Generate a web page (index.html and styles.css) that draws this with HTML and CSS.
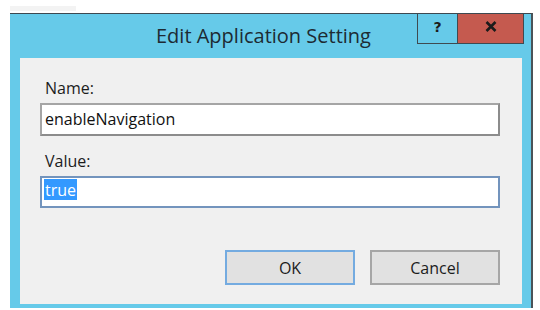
FILE: index.html
```html
<!DOCTYPE html>
<html lang="en">
<head>
    <meta charset="UTF-8">
    <title>Edit Application Setting</title>
    <link rel="stylesheet" href="styles.css">
</head>
<body>
    <div class="scrap"></div>
    <div class="window">
        <div class="titlebar">
            <div class="title">Edit Application Setting</div>
            <div class="caption-buttons">
                <div class="cap-btn help">?</div>
                <div class="cap-btn close">
                    <svg width="12" height="11" viewBox="0 0 12 11">
                        <path d="M1.5 1 L10.5 10 M10.5 1 L1.5 10" stroke="#1b1b1b" stroke-width="2.6" fill="none"/>
                    </svg>
                </div>
            </div>
        </div>
        <div class="panel">
            <label class="field-label">Name:</label>
            <div class="input">enableNavigation</div>
            <label class="field-label">Value:</label>
            <div class="input focused"><span class="selected">true</span></div>
            <div class="actions">
                <div class="btn default">OK</div>
                <div class="btn">Cancel</div>
            </div>
        </div>
    </div>
</body>
</html>
```

FILE: styles.css
```css
body {
    margin: 0;
    background: #fff;
    font-family: "Open Sans", "Noto Sans", sans-serif;
    color: #1c1c1c;
}
.scrap {
    width: 66px;
    height: 5px;
    margin: 6px 0 0 10px;
    background: #f3f3f3;
}
.window {
    margin: 2px 0 0 10px;
    width: 521px;
    height: 294px;
    border-top: 1px solid #3d4850;
    border-right: 2px solid #4a5358;
    background: #66cae9;
    display: flex;
    flex-direction: column;
}
.titlebar {
    height: 44px;
    display: flex;
    align-items: flex-start;
}
.title {
    flex: 1;
    padding: 8px 0 0 146px;
    font-size: 20px;
    color: #1d2a33;
}
.caption-buttons {
    display: flex;
    margin-right: 7px;
    border: 1px solid #3f4a50;
    border-top: none;
}
.cap-btn {
    display: flex;
    align-items: center;
    justify-content: center;
    padding-bottom: 4px;
    height: 25px;
}
.help {
    width: 39px;
    border-right: 1px solid #3f4a50;
    font-family: "DejaVu Sans", sans-serif;
    font-weight: bold;
    font-size: 14px;
    color: #1b1b1b;
}
.close {
    width: 65px;
    background: #c55a4f;
}
.panel {
    flex: 1;
    margin: 0 9px 4px 10px;
    background: #f0f0f0;
    padding: 20px 0 0 20px;
    box-sizing: border-box;
    display: flex;
    flex-direction: column;
}
.field-label {
    display: block;
    padding-left: 5px;
    font-size: 16px;
    line-height: 21px;
    margin-bottom: 4px;
}
.input {
    width: 460px;
    height: 33px;
    box-sizing: border-box;
    background: #fff;
    border: 2px solid #a5a5a5;
    border-right-color: #8c8c8c;
    border-bottom-color: #8c8c8c;
    padding: 4px 0 0 3px;
    font-size: 16px;
    line-height: 21px;
    color: #111;
    margin-bottom: 15px;
}
.input.focused {
    height: 32px;
    border-color: #7394bd;
    padding: 1px 0 0 2px;
}
.selected {
    display: inline-block;
    background: #3399ff;
    color: #fff;
    padding: 1px 1px 0 1px;
    line-height: 20px;
}
.actions {
    display: flex;
    gap: 15px;
    margin: 27px 0 0 185px;
}
.btn {
    width: 130px;
    height: 35px;
    box-sizing: border-box;
    background: #e1e1e1;
    border: 2px solid #a6a6a6;
    display: flex;
    align-items: center;
    justify-content: center;
    font-size: 16px;
    color: #1c1c1c;
}
.btn.default {
    border-color: #74abe0;
}
```
